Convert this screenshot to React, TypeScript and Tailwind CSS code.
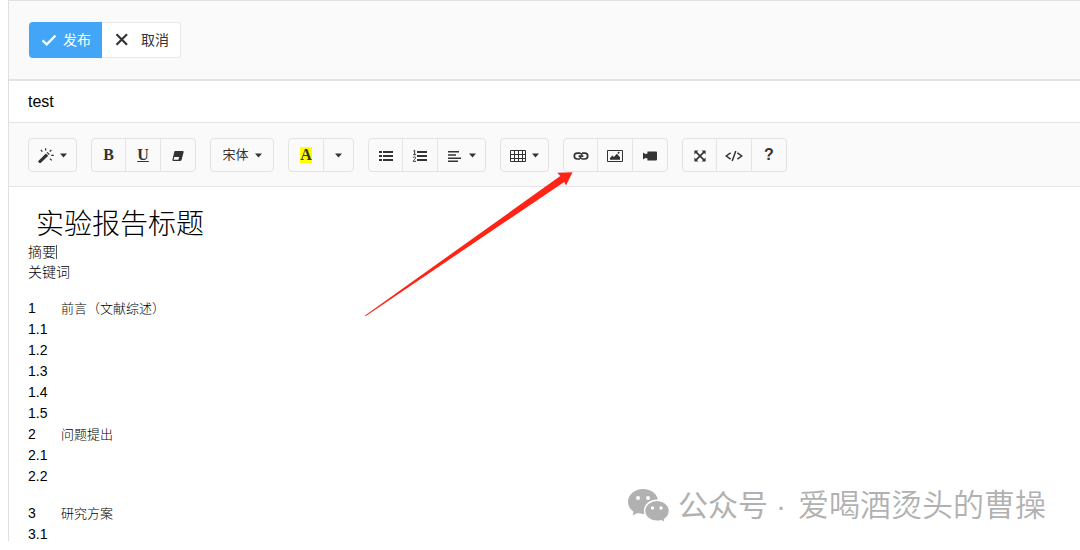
import type { ReactNode } from 'react';

const Caret = () => (
  <svg viewBox="0 0 7 5" className="h-[5px] w-[7px] shrink-0" fill="currentColor" aria-hidden="true">
    <path d="M0 0.500h7L3.500 4.500z" />
  </svg>
);

const Icon = ({ children }: { children: ReactNode }) => (
  <svg viewBox="0 0 16 16" className="h-4 w-4 shrink-0" fill="currentColor" aria-hidden="true">
    {children}
  </svg>
);

const MagicIcon = () => (
  <Icon>
    <path d="M0.300 14L7.900 6.400l2.400 2.400-7.600 7.200a.9.9 0 0 1-1.200 0l-1.200-1a.9.900 0 0 1 0-1zM8.600 5.800l.9-.9 2.200 2.200-.8.9z" />
    <path
      d="M2.800 3l1.600 1.600M7.600 1.200v2.400M13.400 3l-1.700 1.500M13.200 8.400h2.600M12 11.800l1.800 1.600"
      fill="none"
      stroke="currentColor"
      strokeWidth="1.200"
    />
  </Icon>
);

const EraserIcon = () => (
  <Icon>
    <path
      d="M5.400 4h7.200c.8 0 1.200.5 1 1.200l-2 7.600c-.2.700-.7 1.200-1.400 1.200H3.400c-.8 0-1.200-.5-1-1.200l1.800-7.600c.1-.7.5-1.200 1.200-1.200zM4.300 10l-.7 2.800h4.800L9.200 10z"
      fillRule="evenodd"
    />
  </Icon>
);

const ListIcon = () => (
  <Icon>
    <path d="M1 4h3v2H1zM1 8h3v2H1zM1 12h3v2H1zM5 4h10v2H5zM5 8h10v2H5zM5 12h10v2H5z" />
  </Icon>
);

const OrderedListIcon = () => (
  <Icon>
    <path d="M5 4h10v2H5zM5 8h10v2H5zM5 12h10v2H5z" />
    <path
      d="M1.400 4l1.300-.8v4.400M1.200 7.700h3M1.200 10.800c.2-1.300 2.600-1.200 2.400.1-.1 1.100-2.100 2-2.400 3.400H4"
      fill="none"
      stroke="currentColor"
      strokeWidth="1"
    />
  </Icon>
);

const AlignIcon = () => (
  <Icon>
    <path d="M1 4h11v1.600H1zM1 7.200h8v1.600H1zM1 10.400h13V12H1zM1 13.400h10V15H1z" />
  </Icon>
);

const TableIcon = () => (
  <Icon>
    <path
      d="M0.500 3.500h15v11H0.500zM0.500 7.500h15M0.500 11.500h15M4.500 3.500v11M8.500 3.500v11M12.500 3.500v11"
      fill="none"
      stroke="currentColor"
      strokeWidth="1"
    />
  </Icon>
);

const LinkIcon = () => (
  <Icon>
    <path
      d="M7 12H4.200a2.900 2.900 0 0 1 0-5.800h2.200a2.800 2.800 0 0 1 2.600 1.900M9 6.200h2.800a2.900 2.900 0 0 1 0 5.800H9.600A2.800 2.800 0 0 1 7 10.100M5.600 9.100h4.800"
      fill="none"
      stroke="currentColor"
      strokeWidth="1.700"
    />
  </Icon>
);

const PictureIcon = () => (
  <Icon>
    <path d="M0.500 3.500h15v11H0.500z" fill="none" stroke="currentColor" strokeWidth="1" />
    <path d="M3 12.800V11l2.400-2.400 1.400 1.400L10 6.800l3 3.400v2.600z" />
    <circle cx="11.600" cy="5.800" r="1" />
  </Icon>
);

const VideoIcon = () => (
  <Icon>
    <path d="M1 5.600l2.600 1.600V6.800H5.600v4.400H3.600v-.4L1 12.400zM5.400 4.600h8.800c.5 0 .8.300.8.800v7.200c0 .5-.3.800-.8.800H5.400z" />
  </Icon>
);

const FullscreenIcon = () => (
  <Icon>
    <path d="M2.400 3.400h4L2.400 7.400zM13.600 3.400v4l-4-4zM2.400 14.600v-4l4 4zM13.600 14.600h-4l4-4z" />
    <path d="M3.600 4.600l8.800 8.800M12.400 4.600l-8.800 8.800" stroke="currentColor" strokeWidth="1.600" />
  </Icon>
);

const CodeIcon = () => (
  <svg viewBox="0 0 18 16" className="h-4 w-[18px] shrink-0" aria-hidden="true">
    <path
      d="M5.600 5.800L1.200 9l4.400 3.200M12.400 5.800L16.800 9l-4.400 3.200M10.800 4L7.200 14"
      fill="none"
      stroke="currentColor"
      strokeWidth="1.500"
    />
  </svg>
);

const WechatIcon = () => (
  <svg viewBox="0 0 42 34" className="h-[34px] w-[42px] shrink-0" aria-hidden="true">
    <path
      d="M15 0C6.700 0 0 5.700 0 12.800c0 4 2.200 7.600 5.600 9.900L4.600 26.500l5-2.400c1.700.5 3.500.8 5.400.8 8.300 0 15-5.700 15-12.600S23.300 0 15 0z"
      fill="#b1b1b1"
    />
    <path
      d="M29 11.300c-6.900 0-12.400 4.700-12.400 10.500S22.100 32.300 29 32.300c1.500 0 3-.2 4.300-.6l4.200 2.200-1-3.500c3-1.900 4.900-5 4.900-8.600 0-5.800-5.500-10.500-12.400-10.500z"
      fill="#b1b1b1"
      stroke="#fff"
      strokeWidth="1.400"
    />
    <g fill="#fff">
      <circle cx="10" cy="9" r="2" />
      <circle cx="20" cy="9" r="2" />
      <circle cx="24.500" cy="19" r="1.700" />
      <circle cx="33" cy="19" r="1.700" />
    </g>
  </svg>
);

type Tool = { label: string; icon: ReactNode; caret?: boolean; width: string };

const Group = ({ tools }: { tools: Tool[] }) => (
  <div className="flex h-[34px] divide-x divide-[#e5e5e5] rounded-sm border border-[#e3e3e3]">
    {tools.map((tool) => (
      <button
        key={tool.label}
        type="button"
        title={tool.label}
        aria-label={tool.label}
        className={`flex items-center justify-center gap-1.5 hover:bg-gray-100 ${tool.width}`}
      >
        {tool.icon}
        {tool.caret && <Caret />}
      </button>
    ))}
  </div>
);

const letter = "font-['Liberation_Serif',serif] text-base leading-4 font-bold";

const styleTools: Tool[] = [{ label: '样式', icon: <MagicIcon />, caret: true, width: 'w-[47px]' }];

const fontTools: Tool[] = [
  { label: '粗体', icon: <span className={letter}>B</span>, width: 'w-[34px]' },
  { label: '下划线', icon: <span className={`${letter} underline`}>U</span>, width: 'w-[35px]' },
  { label: '清除格式', icon: <EraserIcon />, width: 'w-[34px]' },
];

const colorTools: Tool[] = [
  { label: '最近使用', icon: <span className={`${letter} bg-[#ffff00]`}>A</span>, width: 'w-[35px]' },
  { label: '更多颜色', icon: <Caret />, width: 'w-[29px]' },
];

const paragraphTools: Tool[] = [
  { label: '无序列表', icon: <ListIcon />, width: 'w-[34px]' },
  { label: '有序列表', icon: <OrderedListIcon />, width: 'w-[35px]' },
  { label: '段落', icon: <AlignIcon />, caret: true, width: 'w-[47px]' },
];

const tableTools: Tool[] = [{ label: '表格', icon: <TableIcon />, caret: true, width: 'w-[47px]' }];

const insertTools: Tool[] = [
  { label: '链接', icon: <LinkIcon />, width: 'w-[34px]' },
  { label: '图片', icon: <PictureIcon />, width: 'w-[35px]' },
  { label: '视频', icon: <VideoIcon />, width: 'w-[34px]' },
];

const viewTools: Tool[] = [
  { label: '全屏', icon: <FullscreenIcon />, width: 'w-[34px]' },
  { label: '源代码', icon: <CodeIcon />, width: 'w-[35px]' },
  { label: '帮助', icon: <span className="text-base font-bold">?</span>, width: 'w-[34px]' },
];

const sections = [
  { title: '前言（文献综述）', number: '1', items: ['1.1', '1.2', '1.3', '1.4', '1.5'], gap: false },
  { title: '问题提出', number: '2', items: ['2.1', '2.2'], gap: false },
  { title: '研究方案', number: '3', items: ['3.1'], gap: true },
];

const App = () => {
  return (
    <div className="relative h-screen bg-white pb-[9px] pl-2 font-['Liberation_Sans','Noto_Sans_CJK_SC',sans-serif] text-[#333]">
      <main className="flex h-full flex-col border-t border-l border-[#e0e0e0]">
        <header className="flex border-b-2 border-[#e3e3e3] bg-[#fafafa] px-5 py-[21px]">
          <button type="button" className="flex h-9 items-center gap-1.5 rounded-l-sm bg-[#42a5f5] pr-[11px] pl-3 text-sm text-white">
            <svg viewBox="0 0 16 16" className="h-4 w-4" aria-hidden="true">
              <path d="M1.500 8.400l4.200 4L14.500 3.600" fill="none" stroke="currentColor" strokeWidth="2.200" />
            </svg>
            发布
          </button>
          <button type="button" className="flex h-9 items-center gap-[11px] rounded-r-sm border border-l-0 border-[#e8e8e8] bg-white pr-[11px] pl-3 text-sm">
            <svg viewBox="0 0 16 16" className="h-4 w-4" aria-hidden="true">
              <path d="M2.500 2.300l10.500 10.400M13 2.300L2.500 12.700" fill="none" stroke="currentColor" strokeWidth="2.200" />
            </svg>
            取消
          </button>
        </header>

        <input
          type="text"
          aria-label="标题"
          defaultValue="test"
          className="h-[42px] w-full shrink-0 border-b border-[#e5e5e5] bg-white px-[19px] text-base text-black outline-none"
        />

        <div role="toolbar" aria-label="编辑工具" className="flex flex-wrap gap-[14px] border-b border-[#e5e5e5] bg-[#fafafa] px-[19px] pt-[15px] pb-[14px]">
          <Group tools={styleTools} />
          <Group tools={fontTools} />
          <label className="flex h-[34px] w-16 items-center justify-center gap-1.5 rounded-sm border border-[#e3e3e3]">
            <select aria-label="字体" className="w-[26px] appearance-none bg-transparent text-[13px] outline-none">
              <option>宋体</option>
            </select>
            <Caret />
          </label>
          <Group tools={colorTools} />
          <Group tools={paragraphTools} />
          <Group tools={tableTools} />
          <Group tools={insertTools} />
          <Group tools={viewTools} />
        </div>

        <article className="px-[19px] pt-5 text-black">
          <h1 className="pl-2 text-[28px] leading-[35px] font-light">实验报告标题</h1>
          <p className="flex items-center text-sm leading-5 font-light">
            摘要
            <span className="h-3.5 w-px bg-[#555]" />
          </p>
          <p className="text-sm leading-5 font-light">关键词</p>
          <div className="pt-4">
            {sections.map((section) => (
              <section key={section.number} className={section.gap ? 'pt-4' : ''}>
                <h2 className="flex text-sm leading-[21px]">
                  <span className="w-[33px]">{section.number}</span>
                  <span className="text-[13px] font-light">{section.title}</span>
                </h2>
                {section.items.map((item) => (
                  <p key={item} className="text-sm leading-[21px]">{item}</p>
                ))}
              </section>
            ))}
          </div>
        </article>
      </main>

      {/* pointer to the link button */}
      <svg viewBox="0 0 208 145" className="pointer-events-none absolute top-[172px] left-[365px] h-[145px] w-[208px]" aria-hidden="true">
        <path d="M207.500 0.300L201 13.500l-1.800-3.500L0.500 144.200 0 143.400 195.300 4l-3-3.300z" fill="#ff2416" />
      </svg>

      <div className="absolute right-[34px] bottom-6 flex items-center text-[30px] leading-10 text-[#b1b1b1]">
        <WechatIcon />
        <span className="pl-2">公众号</span>
        <span className="pr-3 pl-2">·</span>
        <span className="text-[31px] font-[350]">爱喝酒烫头的曹操</span>
      </div>
    </div>
  );
};

export default App;
